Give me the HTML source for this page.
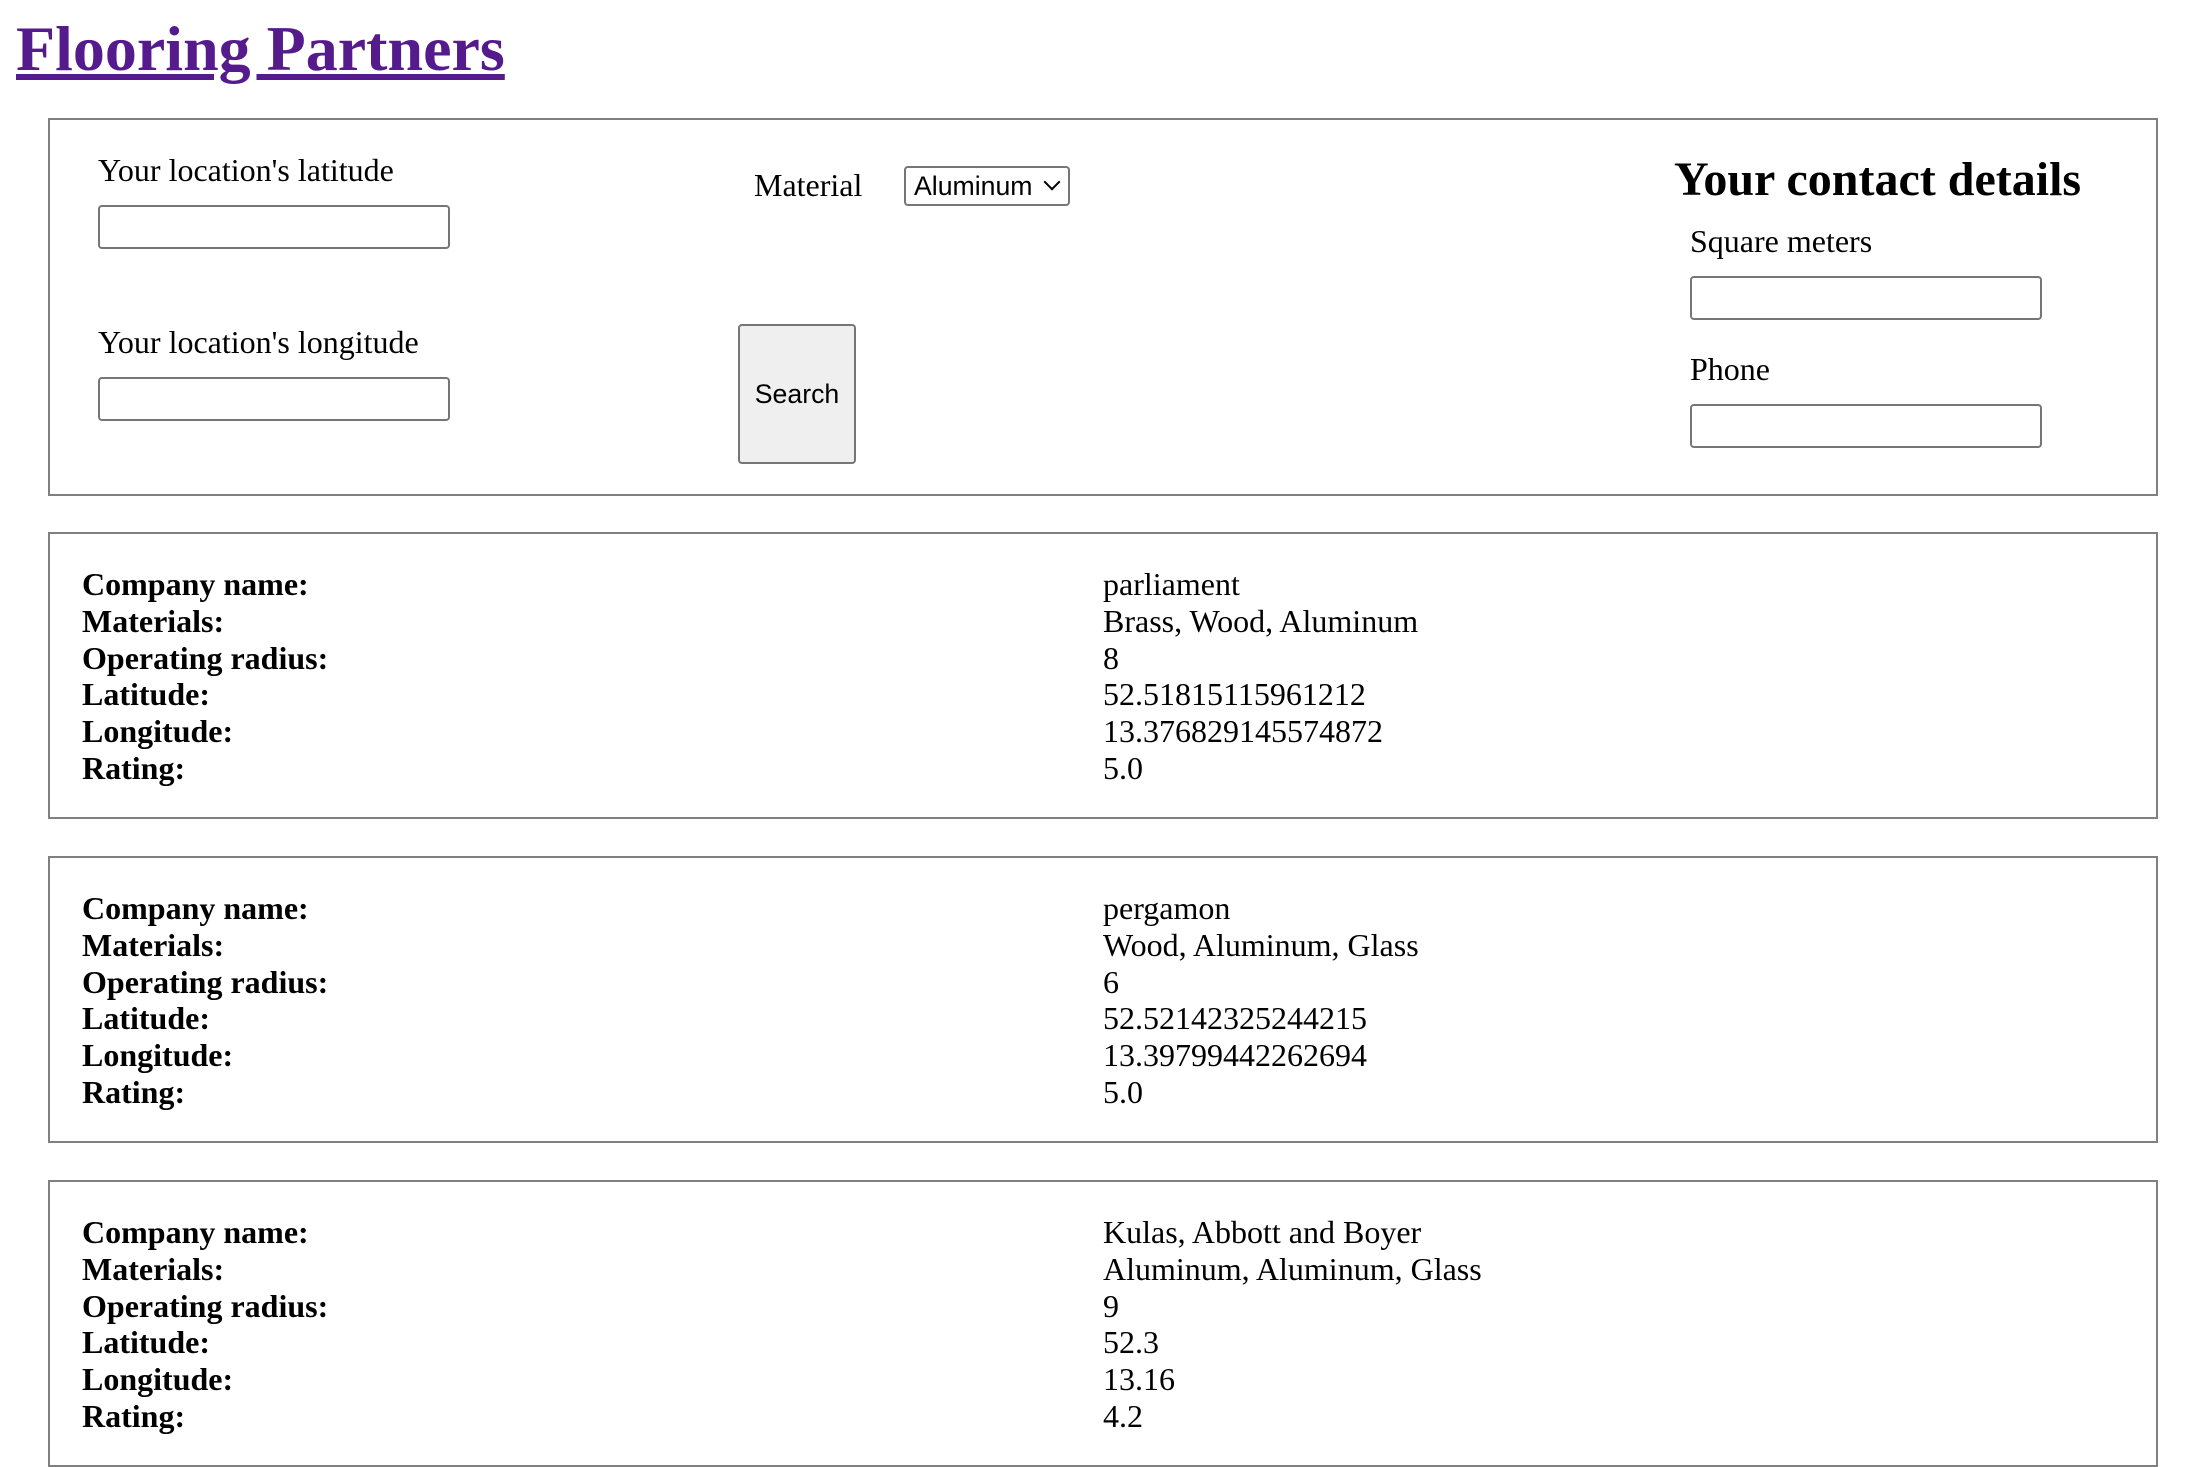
<!DOCTYPE html>
<html><head><meta charset="utf-8">
<style>
html{zoom:2}
body{margin:0;font-family:"Liberation Serif",serif;font-size:16px;color:#000;background:#fff;width:1094px;position:relative}
h1{position:absolute;left:8px;top:6px;margin:0;font-size:32px;line-height:37px}
h1 a{color:#551A8B;text-decoration:underline}
.form{position:absolute;left:24px;top:59px;width:1053px;height:187px;border:1px solid #808080}
.form>*{position:absolute}
.lbl{line-height:18px}
input{box-sizing:border-box;width:176px;height:22px;border:1px solid #767676;border-radius:2px;margin:0;padding:0;background:#fff}
.sel{box-sizing:border-box;width:83px;height:20px;border:1px solid #767676;border-radius:2px;font:13.33px "Liberation Sans",sans-serif;padding:0 0 0 4px;line-height:18px;background:#fff}
.sel span{position:absolute;right:5px;top:4px;width:5px;height:5px;border-right:1.2px solid #000;border-bottom:1.2px solid #000;transform:rotate(45deg)}
.btn{box-sizing:border-box;width:59px;height:70px;border:1px solid #767676;border-radius:2px;background:#efefef;font:13.33px "Liberation Sans",sans-serif;display:flex;align-items:center;justify-content:center}
h2{margin:0;font-size:24px;font-weight:bold;line-height:28px}
.res{position:absolute;left:24px;width:1021px;border:1px solid #808080;padding:16px 16px 15px}
table{border-collapse:collapse;width:100%}
td{padding:0;width:50%;line-height:18.4px;vertical-align:top}
td.k{font-weight:bold}
</style></head><body>
<h1><a href="#">Flooring Partners</a></h1>
<div class="form">
  <div class="lbl" style="left:24px;top:16px">Your location's latitude</div>
  <input style="left:24px;top:42.5px">
  <div class="lbl" style="left:24px;top:102px">Your location's longitude</div>
  <input style="left:24px;top:128.5px">
  <div class="lbl" style="left:352px;top:23.5px">Material</div>
  <div class="sel" style="left:427px;top:23px">Aluminum<span></span></div>
  <div class="btn" style="left:344px;top:102px">Search</div>
  <h2 style="left:812px;top:16px">Your contact details</h2>
  <div class="lbl" style="left:820px;top:51.5px">Square meters</div>
  <input style="left:820px;top:78px">
  <div class="lbl" style="left:820px;top:115.5px">Phone</div>
  <input style="left:820px;top:142px">
</div>
<div class="res" style="top:266px"><table>
<tr><td class="k">Company name:</td><td>parliament</td></tr>
<tr><td class="k">Materials:</td><td>Brass, Wood, Aluminum</td></tr>
<tr><td class="k">Operating radius:</td><td>8</td></tr>
<tr><td class="k">Latitude:</td><td>52.51815115961212</td></tr>
<tr><td class="k">Longitude:</td><td>13.376829145574872</td></tr>
<tr><td class="k">Rating:</td><td>5.0</td></tr>
</table></div>
<div class="res" style="top:428px"><table>
<tr><td class="k">Company name:</td><td>pergamon</td></tr>
<tr><td class="k">Materials:</td><td>Wood, Aluminum, Glass</td></tr>
<tr><td class="k">Operating radius:</td><td>6</td></tr>
<tr><td class="k">Latitude:</td><td>52.52142325244215</td></tr>
<tr><td class="k">Longitude:</td><td>13.39799442262694</td></tr>
<tr><td class="k">Rating:</td><td>5.0</td></tr>
</table></div>
<div class="res" style="top:590px"><table>
<tr><td class="k">Company name:</td><td>Kulas, Abbott and Boyer</td></tr>
<tr><td class="k">Materials:</td><td>Aluminum, Aluminum, Glass</td></tr>
<tr><td class="k">Operating radius:</td><td>9</td></tr>
<tr><td class="k">Latitude:</td><td>52.3</td></tr>
<tr><td class="k">Longitude:</td><td>13.16</td></tr>
<tr><td class="k">Rating:</td><td>4.2</td></tr>
</table></div>
</body></html>
